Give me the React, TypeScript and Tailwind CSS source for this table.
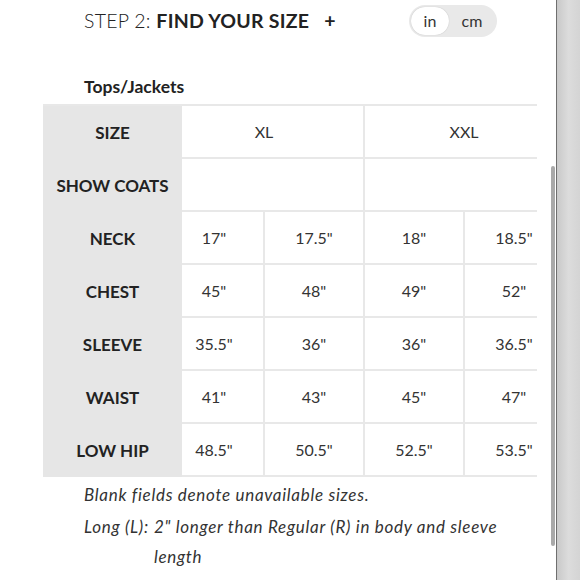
import React from "react";

const font = { fontFamily: "Lato, 'Open Sans', sans-serif" };

const rows: { label: string; values: string[] }[] = [
  { label: "NECK", values: ['17"', '17.5"', '18"', '18.5"'] },
  { label: "CHEST", values: ['45"', '48"', '49"', '52"'] },
  { label: "SLEEVE", values: ['35.5"', '36"', '36"', '36.5"'] },
  { label: "WAIST", values: ['41"', '43"', '45"', '47"'] },
  { label: "LOW HIP", values: ['48.5"', '50.5"', '52.5"', '53.5"'] },
];

function Header() {
  return (
    <div className="flex h-[40px] items-center pl-[84px] pr-[59px] pt-[1px]">
      <div className="flex-1 text-[19.5px] tracking-[0.25px] text-[#222]">
        <span className="font-light">STEP 2: </span>
        <span className="font-bold">FIND YOUR SIZE</span>
        <span className="ml-[15px] font-bold">+</span>
      </div>
      <div className="flex h-[32px] w-[88px] items-center rounded-full bg-[#e9e9e9] p-[2px] text-[16px] text-[#333]">
        <div className="flex h-[28px] w-[38px] items-center justify-center rounded-full bg-white shadow-[0_0_1px_rgba(0,0,0,0.25)]">
          in
        </div>
        <div className="flex flex-1 items-center justify-center">cm</div>
      </div>
    </div>
  );
}

function SizeTable() {
  const labels = ["SIZE", "SHOW COATS", ...rows.map((r) => r.label)];
  return (
    <div className="ml-[43px] flex w-[494px] border-t-2 border-[#e8e8e8]">
      <div className="w-[139px] shrink-0 bg-[#e6e6e6]">
        {labels.map((l) => (
          <div
            key={l}
            className="flex h-[53px] items-center justify-center text-[17px] font-bold text-[#222]"
          >
            {l}
          </div>
        ))}
      </div>
      <div className="flex-1 overflow-hidden">
        <div className="ml-[-17px] w-[400px] text-[16px] text-[#333]">
          {[0, 1].map((r) => (
            <div key={r} className="flex h-[53px] border-b-2 border-[#e8e8e8]">
              <div className="flex w-[200px] items-center justify-center border-r-2 border-[#e8e8e8]">
                {r === 0 ? "XL" : ""}
              </div>
              <div className="flex w-[200px] items-center justify-center border-r-2 border-[#e8e8e8]">
                {r === 0 ? "XXL" : ""}
              </div>
            </div>
          ))}
          {rows.map((row) => (
            <div key={row.label} className="flex h-[53px] border-b-2 border-[#e8e8e8]">
              {row.values.map((v, i) => (
                <div
                  key={i}
                  className="flex w-[100px] items-center justify-center border-r-2 border-[#e8e8e8]"
                >
                  {v}
                </div>
              ))}
            </div>
          ))}
        </div>
      </div>
    </div>
  );
}

export default function App() {
  return (
    <div className="flex h-[580px] w-[580px] overflow-hidden bg-white" style={font}>
      <div className="relative flex-1">
        <Header />
        <div className="mt-[34px] pl-[84px] text-[17.5px] font-bold text-[#222]">Tops/Jackets</div>
        <div className="mt-[4px]">
          <SizeTable />
        </div>
        <div className="mt-[2px] pl-[84px] text-[17px] italic leading-[31px] tracking-[0.7px] text-[#333]">
          <div>Blank fields denote unavailable sizes.</div>
          <div className="mt-[2px] flex leading-[30px]">
            <span className="mr-[5px] whitespace-nowrap">Long (L):</span>
            <span className="w-[350px]">2" longer than Regular (R) in body and sleeve length</span>
          </div>
        </div>
        <div className="absolute left-[551px] top-[166px] h-[380px] w-[4px] rounded-full bg-[#a9a9a9]" />
      </div>
      <div className="w-[24px] border-l border-[#6f6f6f] bg-gradient-to-r from-[#c9c9c9] via-[#dcdcdc] to-[#d4d4d4]" />
    </div>
  );
}
